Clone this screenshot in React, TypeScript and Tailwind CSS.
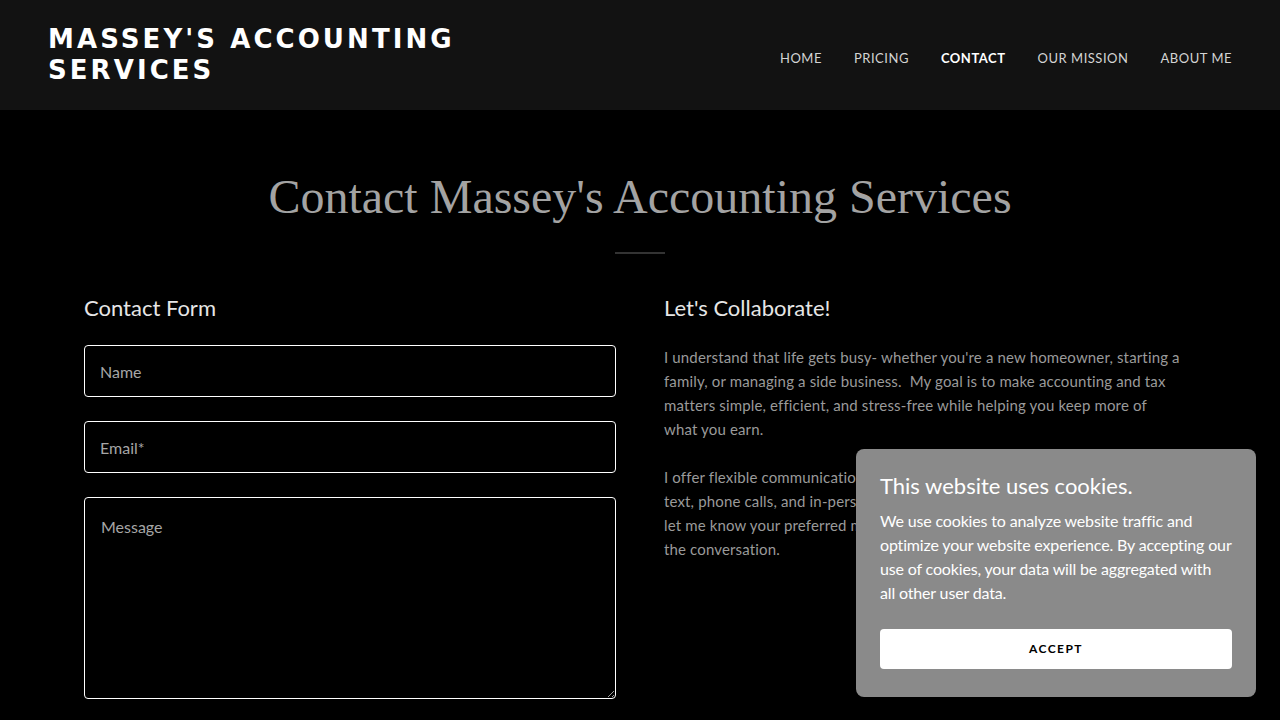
const navItems = ["HOME", "PRICING", "CONTACT", "OUR MISSION", "ABOUT ME"]

const Header = () => (
  <header className="h-[110px] bg-[#121212] flex items-center justify-between pl-12 pr-12">
    <h1 className="font-['DejaVu_Sans',sans-serif] font-bold text-[26px] leading-[31px] tracking-[0.118em] text-white uppercase">
      Massey's Accounting
      <br />
      Services
    </h1>
    <nav className="flex items-center gap-8 pt-2">
      {navItems.map((item) => (
        <a
          key={item}
          href="#"
          className={
            item === "CONTACT"
              ? "text-[13px] tracking-[0.04em] text-white font-bold"
              : "text-[13px] tracking-[0.04em] text-[#d4d4d4]"
          }
        >
          {item}
        </a>
      ))}
    </nav>
  </header>
)

const ContactForm = () => (
  <div className="flex flex-col">
    <h2 className="text-[22px] leading-[28px] text-[#e6e6e6] mb-[23px]">Contact Form</h2>
    <div className="flex flex-col gap-6">
      <input
        placeholder="Name"
        className="h-[52px] w-full bg-black border border-white rounded-[4px] px-[15px] text-[16px] text-white placeholder:text-[#a6a6a6] outline-none"
      />
      <input
        placeholder="Email*"
        className="h-[52px] w-full bg-black border border-white rounded-[4px] px-[15px] text-[16px] text-white placeholder:text-[#a6a6a6] outline-none"
      />
      <textarea
        placeholder="Message"
        className="h-[202px] w-full bg-black border border-white rounded-[4px] px-[16px] pt-[17px] text-[16px] text-white placeholder:text-[#a6a6a6] outline-none"
      />
    </div>
  </div>
)

const Collaborate = () => (
  <div className="flex flex-col">
    <h2 className="text-[22px] leading-[28px] text-[#e6e6e6] mb-[23px]">Let's Collaborate!</h2>
    <div className="max-w-[518px] text-[15px] leading-[24px] text-[#9a9a9a] tracking-[0.01em]">
      <p>
        I understand that life gets busy- whether you're a new homeowner, starting a family, or managing a side
        business.&nbsp; My goal is to make accounting and tax matters simple, efficient, and stress-free while
        helping you keep more of what you earn.
      </p>
      <p className="mt-6">
        I offer flexible communication options to fit your schedule, including email,
        <br />
        text, phone calls, and in-person meetings. Whichever works best for you, just
        <br />
        let me know your preferred method of contact, and we'll begin
        <br />
        the conversation.
      </p>
    </div>
  </div>
)

const CookieBanner = () => (
  <div className="fixed right-6 bottom-[23px] w-[400px] bg-[#8a8a8a] rounded-[8px] px-6 pt-[22px] pb-[28px] text-white">
    <h3 className="text-[22px] leading-[30px] mb-[8px]">This website uses cookies.</h3>
    <p className="text-[16px] leading-[24px] tracking-[-0.01em]">
      We use cookies to analyze website traffic and
      <br />
      optimize your website experience. By accepting our
      <br />
      use of cookies, your data will be aggregated with
      <br />
      all other user data.
    </p>
    <button className="mt-6 w-full h-10 bg-white rounded-[4px] text-black text-[12px] font-bold tracking-[0.12em]">
      ACCEPT
    </button>
  </div>
)

export default function App() {
  return (
    <div className="min-h-screen bg-black font-['Lato',sans-serif]">
      <Header />
      <main className="px-[84px] pt-[60px] pb-10">
        <h2 className="text-center font-['Liberation_Serif',serif] text-[48px] leading-[54px] text-[#a3a3a3]">
          Contact Massey's Accounting Services
        </h2>
        <div className="mx-auto mt-[28px] h-[2px] w-[50px] bg-[#333]" />
        <div className="grid grid-cols-2 gap-12 mt-[40px]">
          <ContactForm />
          <Collaborate />
        </div>
      </main>
      <CookieBanner />
    </div>
  )
}
